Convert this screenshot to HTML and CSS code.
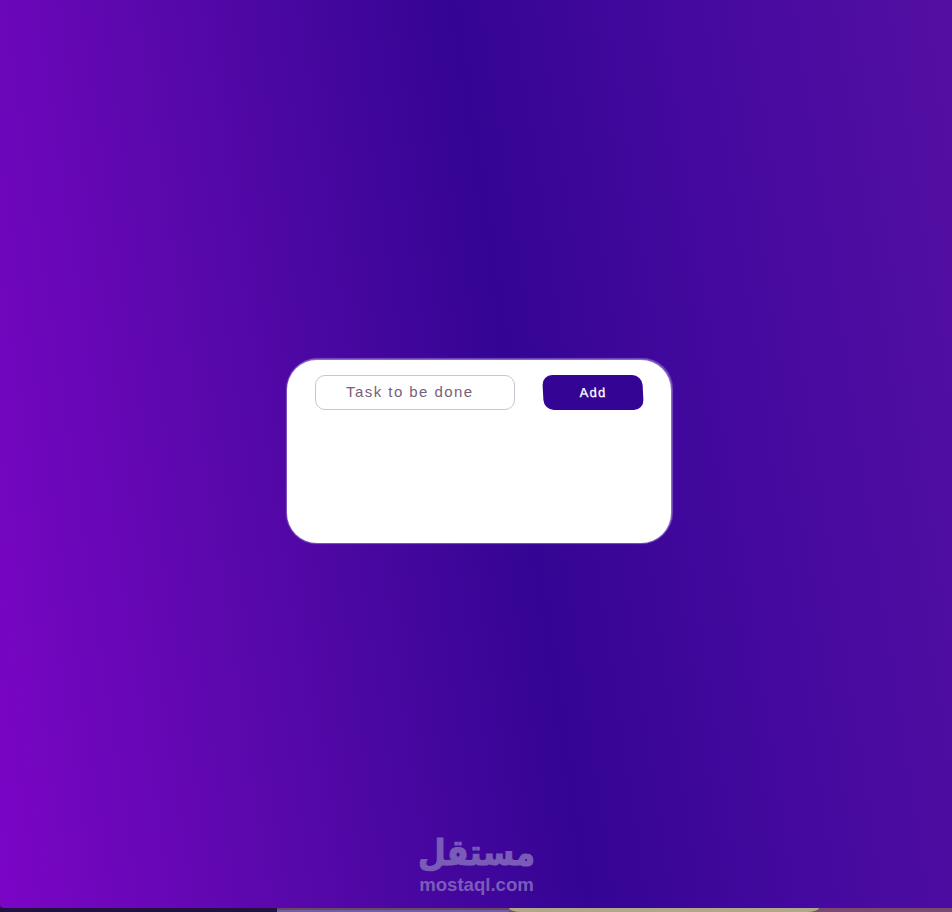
FILE: index.html
```html
<!DOCTYPE html>
<html lang="en">
<head>
<meta charset="utf-8">
<title>To-do list</title>
<link rel="stylesheet" href="styles.css">
</head>
<body>
<main class="page">
  <section class="card">
    <form class="task-form">
      <input class="task-input" type="text" placeholder="Task to be done">
      <button class="add-button" type="button">Add</button>
    </form>
  </section>
  <div class="watermark">
    <span class="watermark-ar" lang="ar" dir="rtl">مستقل</span>
    <span class="watermark-en">mostaql.com</span>
  </div>
</main>
<div class="strip">
  <div class="strip-dark"></div>
  <div class="strip-mid"></div>
  <div class="strip-sand"></div>
</div>
</body>
</html>
```
FILE: styles.css
```css
* { box-sizing: border-box; }
html, body { margin: 0; padding: 0; }
body {
  width: 952px;
  height: 912px;
  overflow: hidden;
  background: #211340;
  font-family: "Liberation Sans", Arial, sans-serif;
}
.page {
  position: relative;
  height: 908px;
  padding: 0 0 5px 6px;
  display: flex;
  align-items: center;
  justify-content: center;
  border-bottom-left-radius: 4px;
  background: linear-gradient(81.5deg, #7b05c6 0%, #5808aa 27%, #340594 54%, #45099f 75%, #540fa2 100%);
}
.card {
  width: 384px;
  height: 183px;
  padding: 15px 28px;
  background: #fff;
  border-radius: 30px;
  box-shadow: 0 0 1px 1px rgba(170, 150, 215, .55), 1px -1px 1px 1px rgba(170, 150, 215, .45);
}
.task-form {
  display: flex;
  gap: 28px;
  align-items: flex-start;
}
.task-input {
  width: 200px;
  height: 35px;
  padding: 0 20px 2px 30px;
  border: 1px solid #c8c4d8;
  border-radius: 10px;
  background: #fff;
  font: 15px "Liberation Sans", Arial, sans-serif;
  letter-spacing: 1.45px;
  outline: none;
}
.task-input::placeholder { color: #75607a; opacity: 1; }
.add-button {
  width: 100px;
  height: 35px;
  padding: 0 0 1px;
  border: 0;
  border-radius: 10px;
  background: #340594;
  color: #fff;
  font: 13px "Liberation Sans", Arial, sans-serif;
  letter-spacing: 1.3px;
  -webkit-text-stroke: .3px #fff;
  transform: skewX(3deg);
}
.watermark {
  position: absolute;
  left: 419px;
  top: 836px;
  width: 115px;
  display: flex;
  flex-direction: column;
  align-items: center;
  color: #7a5cb8;
  font-weight: bold;
}
.watermark-ar {
  font: bold 32px "DejaVu Sans", sans-serif;
  -webkit-text-stroke: 1px #7a5cb8;
  transform: scaleY(1.12);
  transform-origin: 50% 100%;
}
.watermark-en {
  font-size: 18.6px;
  line-height: 21px;
}
.strip {
  height: 4px;
  display: flex;
  background: #7a4a70;
}
.strip-dark { width: 277px; background: #211340; }
.strip-mid {
  width: 232px;
  background: linear-gradient(180deg, #6b4a5f 0 50%, #7060a8 50% 100%);
}
.strip-sand {
  width: 310px;
  background: #b0a888;
  border-radius: 0 0 12px 12px / 0 0 4px 4px;
}
```
